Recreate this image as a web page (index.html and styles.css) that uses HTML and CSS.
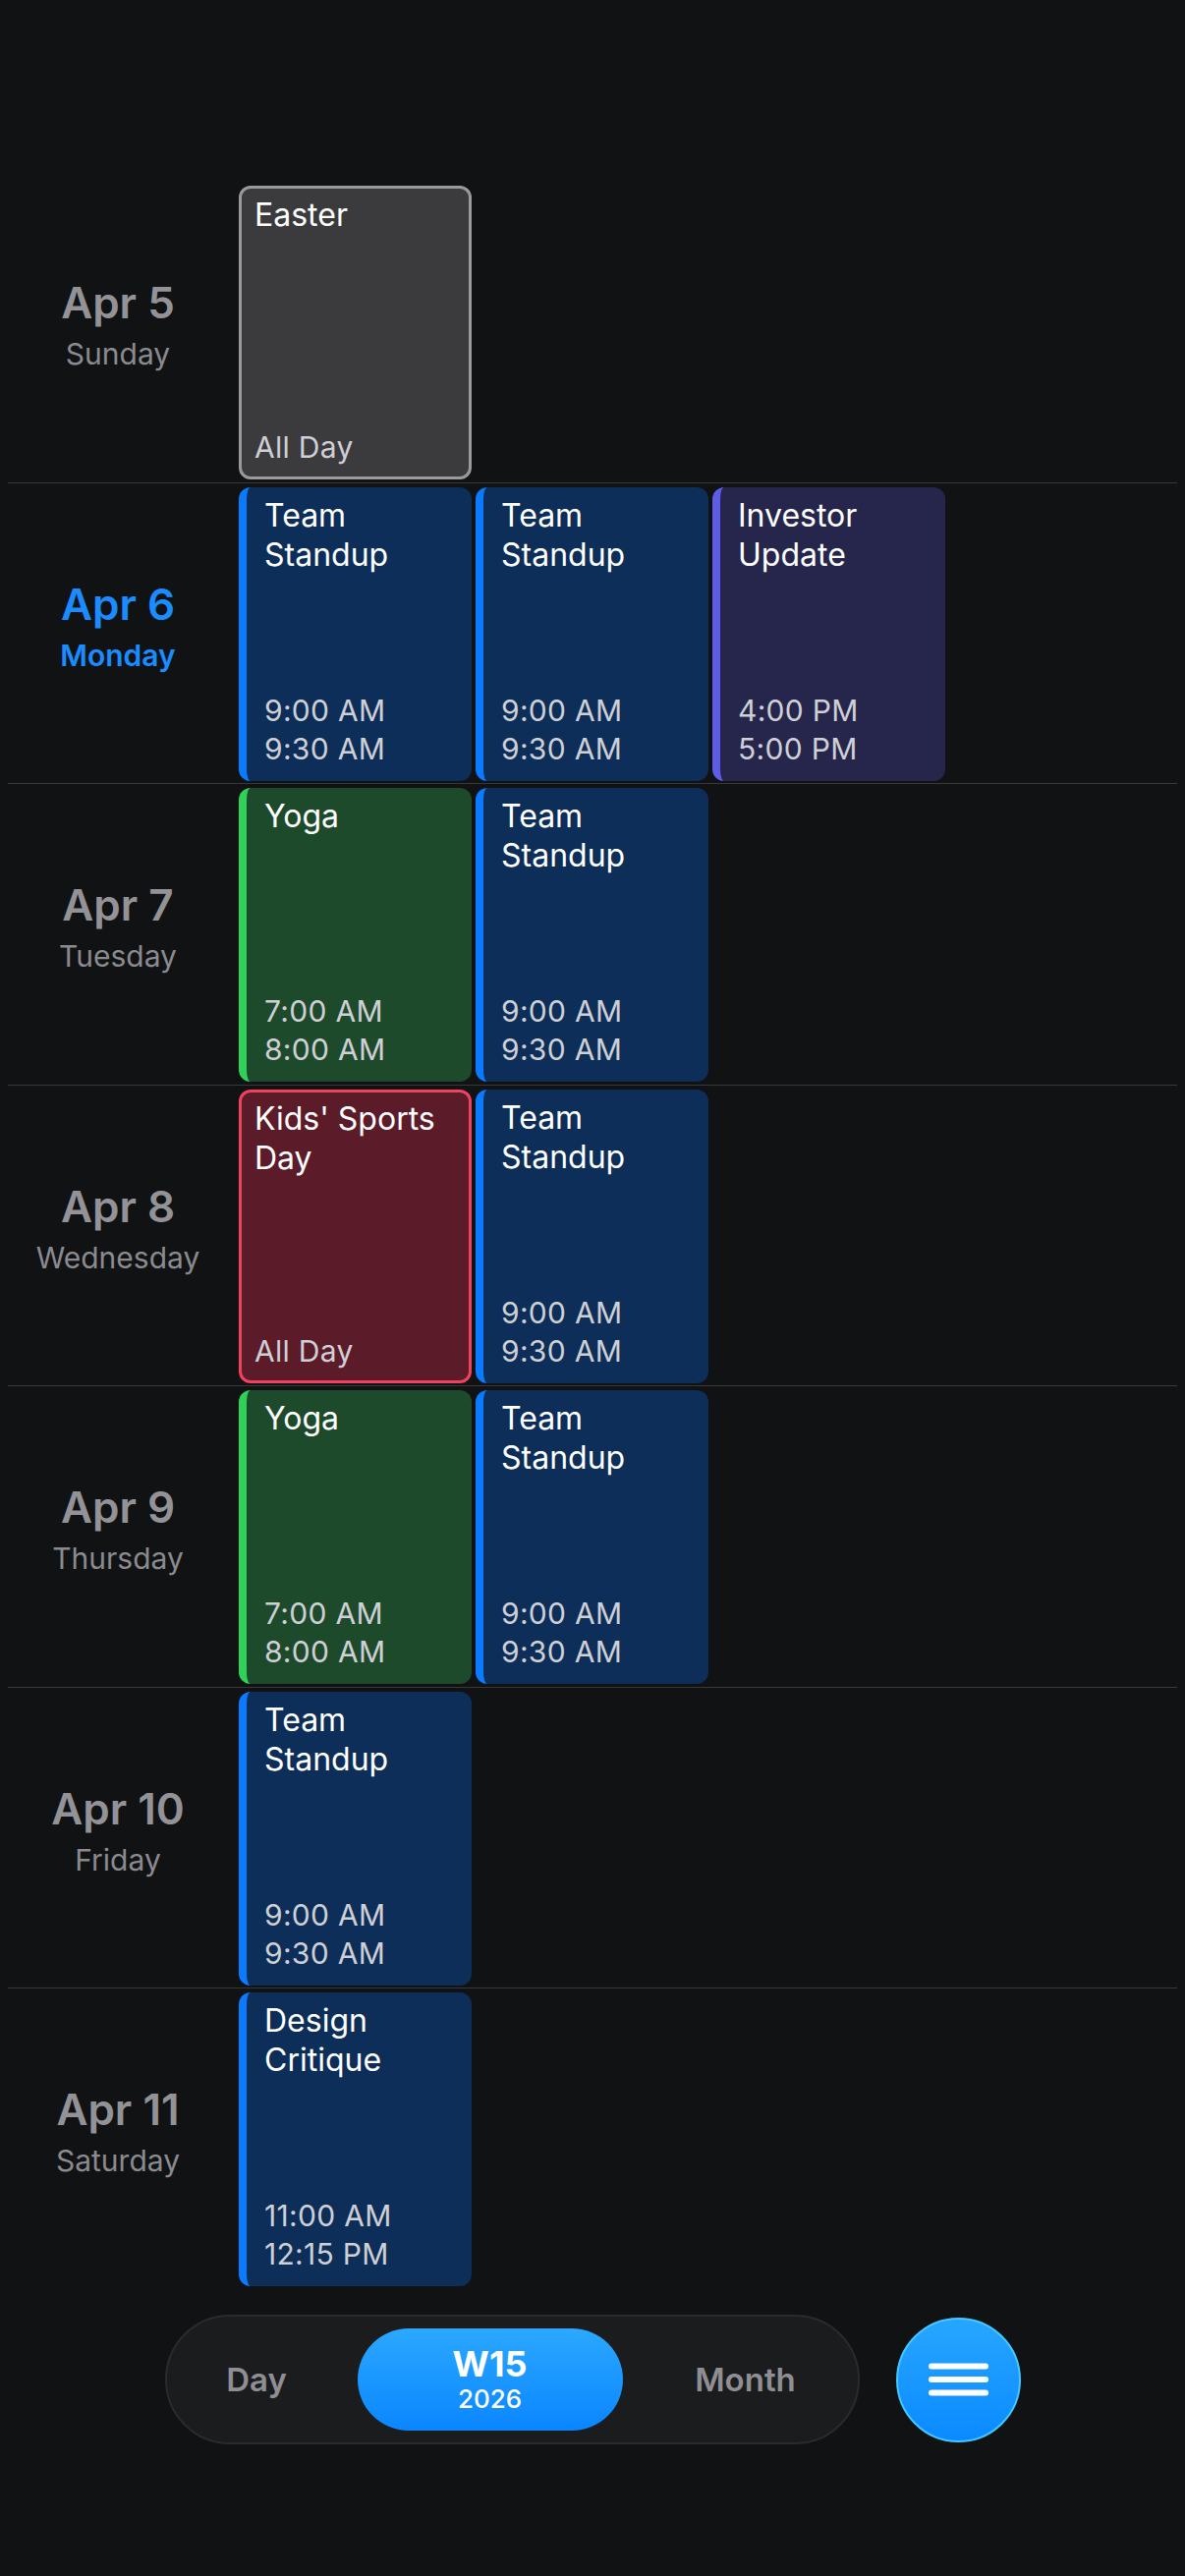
FILE: index.html
```html
<!DOCTYPE html>
<html lang="en">
  <head>
    <meta charset="utf-8" />
    <meta name="viewport" content="width=device-width, initial-scale=1.0" />
    <title>Week 15</title>
    <link rel="stylesheet" href="styles.css">
  </head>

  <body>
    <main class="week">
      <section class="day-row">
        <div class="day-label">
          <span class="day-date">Apr 5</span>
          <span class="day-name">Sunday</span>
        </div>
        <div class="day-events">
          <article class="event event-allday event-gray">
            <span class="event-title">Easter</span>
            <span class="event-time">All Day</span>
          </article>
        </div>
      </section>

      <section class="day-row today">
        <div class="day-label">
          <span class="day-date">Apr 6</span>
          <span class="day-name">Monday</span>
        </div>
        <div class="day-events">
          <article class="event event-blue">
            <span class="event-title">Team Standup</span>
            <span class="event-time">9:00 AM<br>9:30 AM</span>
          </article>
          <article class="event event-blue">
            <span class="event-title">Team Standup</span>
            <span class="event-time">9:00 AM<br>9:30 AM</span>
          </article>
          <article class="event event-indigo">
            <span class="event-title">Investor Update</span>
            <span class="event-time">4:00 PM<br>5:00 PM</span>
          </article>
        </div>
      </section>

      <section class="day-row">
        <div class="day-label">
          <span class="day-date">Apr 7</span>
          <span class="day-name">Tuesday</span>
        </div>
        <div class="day-events">
          <article class="event event-green">
            <span class="event-title">Yoga</span>
            <span class="event-time">7:00 AM<br>8:00 AM</span>
          </article>
          <article class="event event-blue">
            <span class="event-title">Team Standup</span>
            <span class="event-time">9:00 AM<br>9:30 AM</span>
          </article>
        </div>
      </section>

      <section class="day-row">
        <div class="day-label">
          <span class="day-date">Apr 8</span>
          <span class="day-name">Wednesday</span>
        </div>
        <div class="day-events">
          <article class="event event-allday event-red">
            <span class="event-title">Kids' Sports Day</span>
            <span class="event-time">All Day</span>
          </article>
          <article class="event event-blue">
            <span class="event-title">Team Standup</span>
            <span class="event-time">9:00 AM<br>9:30 AM</span>
          </article>
        </div>
      </section>

      <section class="day-row">
        <div class="day-label">
          <span class="day-date">Apr 9</span>
          <span class="day-name">Thursday</span>
        </div>
        <div class="day-events">
          <article class="event event-green">
            <span class="event-title">Yoga</span>
            <span class="event-time">7:00 AM<br>8:00 AM</span>
          </article>
          <article class="event event-blue">
            <span class="event-title">Team Standup</span>
            <span class="event-time">9:00 AM<br>9:30 AM</span>
          </article>
        </div>
      </section>

      <section class="day-row">
        <div class="day-label">
          <span class="day-date">Apr 10</span>
          <span class="day-name">Friday</span>
        </div>
        <div class="day-events">
          <article class="event event-blue">
            <span class="event-title">Team Standup</span>
            <span class="event-time">9:00 AM<br>9:30 AM</span>
          </article>
        </div>
      </section>

      <section class="day-row">
        <div class="day-label">
          <span class="day-date">Apr 11</span>
          <span class="day-name">Saturday</span>
        </div>
        <div class="day-events">
          <article class="event event-blue">
            <span class="event-title">Design Critique</span>
            <span class="event-time">11:00 AM<br>12:15 PM</span>
          </article>
        </div>
      </section>
    </main>

    <nav class="bottom-bar">
      <div class="view-switch">
        <button class="view-option" type="button">Day</button>
        <button class="view-option selected" type="button">
          <span class="week-num">W15</span>
          <span class="week-year">2026</span>
        </button>
        <button class="view-option" type="button">Month</button>
      </div>
      <button class="menu-btn" type="button" aria-label="Menu">
        <svg width="61" height="34" viewBox="0 0 61 34">
          <path d="M3 3.5H58M3 17H58M3 30.5H58" stroke="#fff" stroke-width="6" stroke-linecap="round" fill="none"/>
        </svg>
      </button>
    </nav>
  </body>
</html>
```

FILE: styles.css
```css
body {
  margin: 0;
  padding: 0;
  background-color: #111214;
  font-family: Inter, "Noto Sans", sans-serif;
  color: #fff;
}

.week {
  padding: 185px 8px 0;
}

.day-row {
  display: flex;
  align-items: center;
  padding: 4px 0 2.5px;
  border-bottom: 1px solid #38383b;
}
.day-row:last-child {
  border-bottom: none;
}

.day-label {
  width: 224px;
  margin-right: 11px;
  padding-bottom: 16px;
  display: flex;
  flex-direction: column;
  align-items: center;
  color: #929297;
}
.day-date {
  font-size: 44px;
  font-weight: 600;
  line-height: 52px;
}
.day-name {
  margin-top: 7px;
  font-size: 30px;
  line-height: 38px;
  color: #8a8a8f;
}
.today .day-date,
.today .day-name {
  color: #1a8cff;
}
.today .day-name {
  font-weight: 600;
}

.day-events {
  display: flex;
  gap: 4px;
}

.event {
  width: 237px;
  height: 299px;
  box-sizing: border-box;
  border-radius: 12px;
  padding: 9px 10px 13px 18px;
  display: flex;
  flex-direction: column;
  justify-content: space-between;
  border-left: 8px solid transparent;
}
.event-title {
  font-size: 32px;
  line-height: 40px;
}
.event-time {
  font-size: 30px;
  line-height: 39px;
  color: #cfd0d6;
  letter-spacing: 0.3px;
}

.event-allday {
  border: 3px solid transparent;
  padding: 7px 8px 10px 13px;
}

.event-blue {
  background-color: #0c2e58;
  border-left-color: #0a7aff;
}
.event-indigo {
  background-color: #26264c;
  border-left-color: #5e5ce6;
}
.event-green {
  background-color: #1e4a2c;
  border-left-color: #30d158;
}
.event-gray {
  background-color: #3b3b3d;
  border-color: #9a9a9c;
}
.event-red {
  background-color: #5c1b29;
  border-color: #f2405f;
}

.bottom-bar {
  display: flex;
  justify-content: center;
  align-items: center;
  gap: 37px;
  margin-top: 26.5px;
}

.view-switch {
  width: 707px;
  height: 132px;
  box-sizing: border-box;
  border: 2px solid #2a2b2e;
  border-radius: 66px;
  background-color: #1b1c1e;
  padding: 12px 0;
  display: grid;
  grid-template-columns: 183px 270px 1fr;
  column-gap: 11px;
}

.view-option {
  border: none;
  background: none;
  font-family: inherit;
  font-size: 33px;
  font-weight: 600;
  color: #8e8e93;
  padding: 0;
  cursor: pointer;
}
.view-option.selected {
  display: flex;
  flex-direction: column;
  align-items: center;
  justify-content: center;
  border-radius: 52px;
  background: linear-gradient(to bottom, #2ba8ff, #0a86ff);
  color: #fff;
}
.week-num {
  font-size: 36px;
  font-weight: 700;
  line-height: 40px;
}
.week-year {
  font-size: 26px;
  font-weight: 500;
  line-height: 32px;
}

.menu-btn {
  width: 127px;
  height: 127px;
  box-sizing: border-box;
  border-radius: 50%;
  border: 2px solid #45c8ff;
  background: linear-gradient(to bottom, #27a6ff, #0a8aff);
  display: flex;
  align-items: center;
  justify-content: center;
  padding: 0;
  cursor: pointer;
}
.menu-btn svg {
  display: block;
}
```
